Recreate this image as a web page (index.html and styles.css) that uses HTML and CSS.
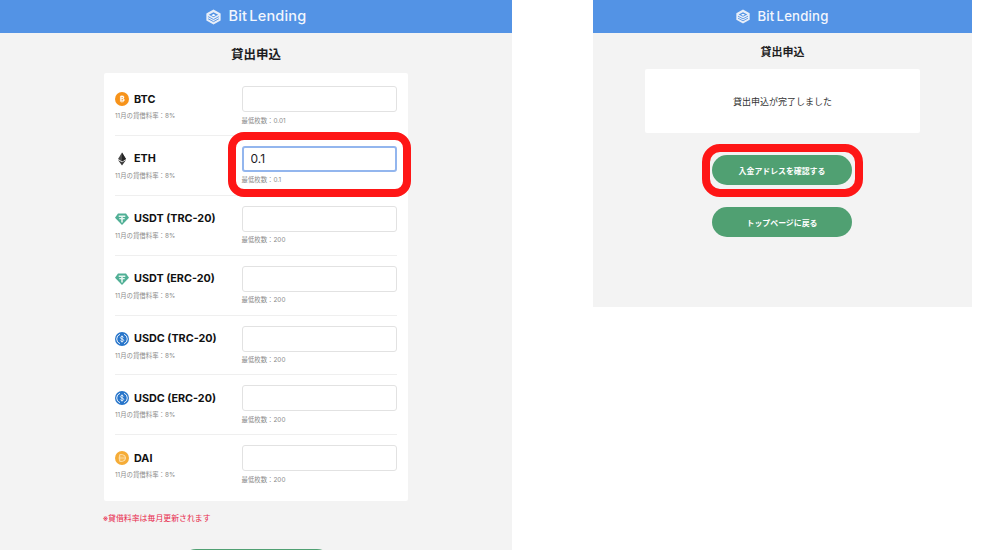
FILE: index.html
```html
<!DOCTYPE html>
<html lang="ja">
<head>
<meta charset="utf-8">
<title>BitLending</title>
<link rel="stylesheet" href="styles.css">
</head>
<body>
<svg class="defs" width="0" height="0" aria-hidden="true">
  <defs>
    <symbol id="logo" viewBox="1.500 1 21 22">
      <path d="M12 1.500 22 7v10l-10 5.500L2 17V7z" fill="#e8eef8"/>
      <path d="M12 5.500 18.500 9 12 12.500 5.500 9z" fill="#5393e5"/>
      <path d="M4.500 11.500 12 15.500l7.500-4M4.500 14.500 12 18.500l7.500-4" fill="none" stroke="#5393e5" stroke-width="1.300"/>
      <path d="M12 7.800 15 9.400 12 11 9 9.400z" fill="#fff"/>
    </symbol>
    <symbol id="btc" viewBox="0 0 14 14">
      <circle cx="7" cy="7" r="7" fill="#f7931a"/>
      <path d="M5.300 3.900h2.200c1 0 1.600.5 1.600 1.400 0 .6-.3 1-.8 1.200.7.200 1.100.7 1.100 1.400 0 1-.7 1.700-1.800 1.700H5.300zM6.400 4.900v1.300h1c.4 0 .7-.3.700-.7s-.3-.6-.7-.6zm0 2.200v1.500h1.200c.5 0 .8-.3.800-.8s-.3-.7-.8-.7zM6.400 3v1M7.800 3v1M6.400 10v1M7.800 10v1" fill="#fff" stroke="#fff" stroke-width=".300" fill-rule="evenodd"/>
    </symbol>
    <symbol id="eth" viewBox="0 0 14 14">
      <path d="M7 .5 3 7.100 7 9.500l4-2.400z" fill="#4a4a4a"/>
      <path d="M7 .5v9l4-2.400z" fill="#262626"/>
      <path d="M3 7.900 7 13.500l4-5.600L7 10.300z" fill="#3a3a3a"/>
    </symbol>
    <symbol id="usdt" viewBox="0 0 14 14">
      <path d="M3 1.500h8L14 5.800 7 13 0 5.800z" fill="#50af95"/>
      <path d="M3.700 3.500h6.600v1.500H7.800v1.100c1.300.1 2.300.3 2.300.6s-1 .6-2.300.7v3H6.200v-3c-1.300-.1-2.300-.4-2.300-.7s1-.5 2.300-.6V5H3.700z" fill="#e6f5f0"/>
    </symbol>
    <symbol id="usdc" viewBox="0 0 14 14">
      <circle cx="7" cy="7" r="7" fill="#2775ca"/>
      <path d="M5 2.300a5 5 0 0 0 0 9.400M9 2.300a5 5 0 0 1 0 9.400" fill="none" stroke="#fff" stroke-width=".9"/>
      <path d="M8.600 5.500C8.400 4.800 7.800 4.500 7 4.500c-.9 0-1.600.4-1.600 1.200 0 1.700 3.300.8 3.300 2.600 0 .8-.7 1.200-1.700 1.200-.9 0-1.500-.4-1.700-1.100M7 3.500v7" fill="none" stroke="#fff" stroke-width=".8"/>
    </symbol>
    <symbol id="dai" viewBox="0 0 14 14">
      <circle cx="7" cy="7" r="7" fill="#f5ac37"/>
      <path d="M4.700 3.700h2.500a3.300 3.300 0 0 1 0 6.600H4.700z" fill="none" stroke="#fde3b4" stroke-width="1"/>
      <path d="M3.500 6.200h7M3.500 7.800h7" stroke="#fde3b4" stroke-width=".7"/>
    </symbol>
  </defs>
</svg>

<main class="screens">
  <section class="panel panel-form">
    <header class="topbar">
      <div class="brand">
        <svg class="brand-mark"><use href="#logo"/></svg>
        <span class="brand-name">Bit<span class="brand-part">Lending</span></span>
      </div>
    </header>
    <h1 class="title">貸出申込</h1>
    <div class="card">
      <div class="row">
        <div class="coin">
          <div class="coin-name"><svg class="coin-icon"><use href="#btc"/></svg>BTC</div>
          <p class="hint">11月の貸借料率：8%</p>
        </div>
        <div class="field"><input class="amount" type="text"><p class="hint">最低枚数：0.01</p></div>
      </div>
      <div class="row">
        <div class="coin">
          <div class="coin-name"><svg class="coin-icon"><use href="#eth"/></svg>ETH</div>
          <p class="hint">11月の貸借料率：8%</p>
        </div>
        <div class="field"><input class="amount amount-active" type="text" value="0.1"><p class="hint">最低枚数：0.1</p></div>
      </div>
      <div class="row">
        <div class="coin">
          <div class="coin-name"><svg class="coin-icon"><use href="#usdt"/></svg>USDT (TRC-20)</div>
          <p class="hint">11月の貸借料率：8%</p>
        </div>
        <div class="field"><input class="amount" type="text"><p class="hint">最低枚数：200</p></div>
      </div>
      <div class="row">
        <div class="coin">
          <div class="coin-name"><svg class="coin-icon"><use href="#usdt"/></svg>USDT (ERC-20)</div>
          <p class="hint">11月の貸借料率：8%</p>
        </div>
        <div class="field"><input class="amount" type="text"><p class="hint">最低枚数：200</p></div>
      </div>
      <div class="row">
        <div class="coin">
          <div class="coin-name"><svg class="coin-icon"><use href="#usdc"/></svg>USDC (TRC-20)</div>
          <p class="hint">11月の貸借料率：8%</p>
        </div>
        <div class="field"><input class="amount" type="text"><p class="hint">最低枚数：200</p></div>
      </div>
      <div class="row">
        <div class="coin">
          <div class="coin-name"><svg class="coin-icon"><use href="#usdc"/></svg>USDC (ERC-20)</div>
          <p class="hint">11月の貸借料率：8%</p>
        </div>
        <div class="field"><input class="amount" type="text"><p class="hint">最低枚数：200</p></div>
      </div>
      <div class="row">
        <div class="coin">
          <div class="coin-name"><svg class="coin-icon"><use href="#dai"/></svg>DAI</div>
          <p class="hint">11月の貸借料率：8%</p>
        </div>
        <div class="field"><input class="amount" type="text"><p class="hint">最低枚数：200</p></div>
      </div>
    </div>
    <p class="notice">※貸借料率は毎月更新されます</p>
    <div class="pill pill-cut"></div>
    <div class="callout callout-input"></div>
  </section>

  <section class="panel panel-done">
    <header class="topbar">
      <div class="brand brand-small">
        <svg class="brand-mark"><use href="#logo"/></svg>
        <span class="brand-name">Bit<span class="brand-part">Lending</span></span>
      </div>
    </header>
    <h2 class="title title-small">貸出申込</h2>
    <div class="card card-done">貸出申込が完了しました</div>
    <div class="actions">
      <a class="pill">入金アドレスを確認する</a>
      <a class="pill">トップページに戻る</a>
    </div>
    <div class="callout callout-button"></div>
  </section>
</main>
</body>
</html>
```
FILE: styles.css
```css
* { box-sizing: border-box; }

html, body {
  margin: 0;
  height: 550px;
  overflow: hidden;
  background: #fff;
  font-family: Inter, "Noto Sans CJK JP", sans-serif;
  color: #1d1d1f;
}

.defs { position: absolute; }

.screens {
  display: flex;
  align-items: flex-start;
  gap: 81px;
}

.panel {
  position: relative;
  flex: none;
  background: #f3f3f3;
  overflow: hidden;
}

.panel-form { width: 512px; height: 550px; }
.panel-done { width: 379px; height: 307px; }

.topbar {
  height: 33px;
  background: #5393e5;
  display: flex;
  align-items: center;
  justify-content: center;
}

.brand {
  display: flex;
  align-items: center;
  gap: 8px;
  color: #f2f6fd;
}

.brand-mark { width: 15px; height: 16px; }

.brand-name {
  font-family: Inter, sans-serif;
  font-size: 14.500px;
  font-weight: 500;
  letter-spacing: .2px;
  line-height: 1;
}

.brand-part { margin-left: 2px; }

.brand-small { gap: 7px; }
.brand-small .brand-mark { width: 14px; height: 15px; }
.brand-small .brand-name { font-size: 13.200px; letter-spacing: .2px; }

.title {
  margin: 13px 0 10px;
  height: 17px;
  font-size: 12.500px;
  line-height: 17px;
  font-weight: 700;
  text-align: center;
}

.title-small {
  margin: 12px 0 9px;
  height: 15px;
  font-size: 11px;
  line-height: 15px;
}

.card {
  width: 304px;
  margin-left: 104px;
  padding: 3px 11px 5.700px;
  background: #fff;
  border-radius: 2px;
}

.row {
  height: 59.900px;
  padding-top: 10px;
  display: grid;
  grid-template-columns: 1fr 155.500px;
  border-bottom: 1px solid #efefef;
}

.row:last-child { border-bottom: 0; }

.coin-name {
  height: 26px;
  display: flex;
  align-items: center;
  gap: 5px;
  font-size: 10.800px;
  font-weight: 700;
  color: #111;
  white-space: nowrap;
}

.coin-icon { width: 14px; height: 14px; flex: none; }

.hint {
  margin: 0;
  font-size: 6.400px;
  line-height: 9px;
  color: #8a8a8a;
}

.coin .hint { margin-top: 0; }
.field .hint { margin-top: 4.500px; }

.amount {
  display: block;
  width: 100%;
  height: 26px;
  padding: 0 9px;
  border: 1.500px solid #e2e2e2;
  border-radius: 3px;
  background: #fff;
  font: 12px Inter, sans-serif;
  color: #1d1d1f;
  outline: none;
}

.amount-active {
  border: 2px solid #93b6ee;
  padding: 0 7px;
}

.notice {
  margin: 12px 0 0 103px;
  font-size: 7.900px;
  line-height: 11px;
  color: #e8294c;
}

.pill {
  display: flex;
  align-items: center;
  justify-content: center;
  width: 140px;
  height: 30px;
  border-radius: 15px;
  background: #50a072;
  color: #fff;
  font-size: 7.900px;
  font-weight: 700;
}

.pill-cut {
  width: 151px;
  margin: 25px 0 0 181px;
}

.card-done {
  width: 275px;
  height: 64px;
  margin-left: 52px;
  padding: 0;
  display: flex;
  align-items: center;
  justify-content: center;
  font-size: 9px;
  color: #333;
}

.actions {
  margin: 22px 0 0 119px;
  display: flex;
  flex-direction: column;
  gap: 22px;
}

.callout {
  position: absolute;
  border: 8px solid #fe1616;
  pointer-events: none;
}

.callout-input {
  left: 228px;
  top: 132px;
  width: 183px;
  height: 65px;
  border-radius: 16px;
}

.callout-button {
  left: 109px;
  top: 144px;
  width: 161px;
  height: 53px;
  border-radius: 18px;
}
```
